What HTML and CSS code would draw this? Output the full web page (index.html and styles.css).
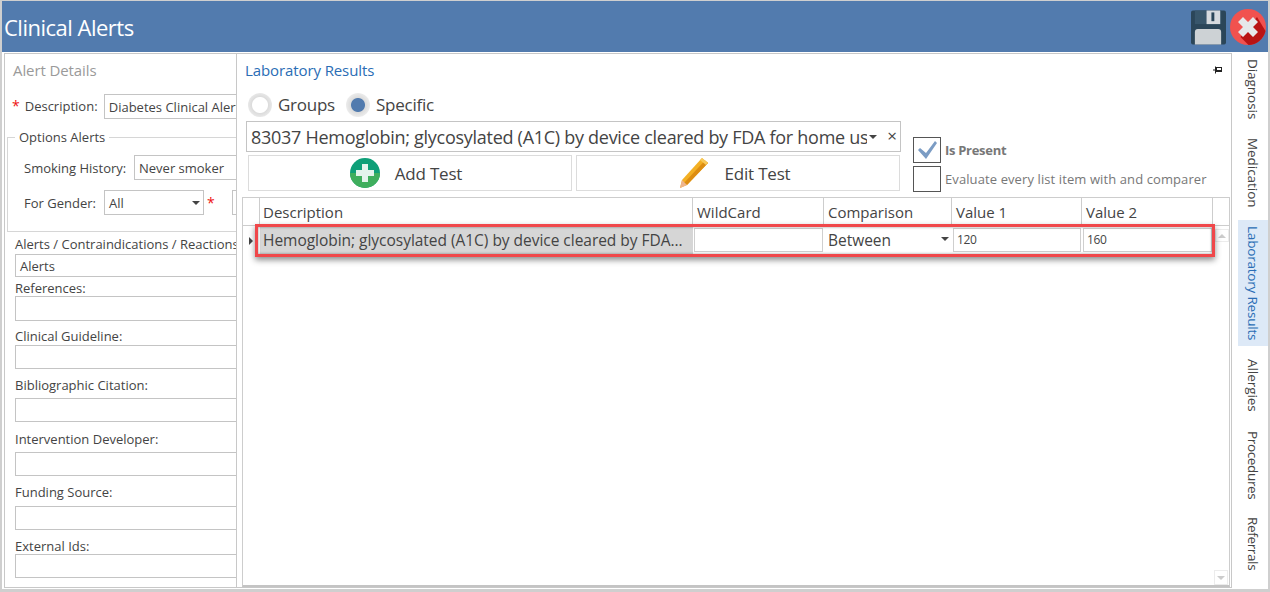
FILE: index.html
```html
<!DOCTYPE html>
<html lang="en">
<head>
<meta charset="utf-8">
<title>Clinical Alerts</title>
<link rel="stylesheet" href="styles.css">
</head>
<body>
<div class="window">
  <header class="titlebar">
    <h1 class="title">Clinical Alerts</h1>
    <div class="title-actions">
      <svg class="save-icon" width="35" height="35" viewBox="0 0 36 35"><rect x="0" y="0" width="36" height="35" rx="2" fill="#2b4659"/><rect x="4" y="0" width="27" height="14" fill="#38566b"/><rect x="16" y="0" width="14" height="14" fill="#d6dade"/><rect x="21" y="2" width="3" height="9" fill="#2b4659"/><path d="M4 35V22a3 3 0 0 1 3-3h21a3 3 0 0 1 3 3v13z" fill="#cdd2d5"/></svg>
      <svg class="close-icon" width="36" height="36" viewBox="0 0 36 36"><circle cx="18" cy="18" r="18" fill="#f1524f"/><path d="M27 8 35.500 22a18 18 0 0 1-17 14l-8-8z" fill="#b91414"/><path d="M8 13l5-5 5 5 5-5 5 5-5 5 5 5-5 5-5-5-5 5-5-5 5-5z" fill="#e6e8ea"/></svg>
    </div>
  </header>
  <main class="content">
    <section class="details">
      <h2 class="details-title">Alert Details</h2>
      <div class="row row-desc">
        <span class="star">*</span>
        <span class="lbl lbl-desc">Description:</span>
        <div class="box box-desc">Diabetes Clinical Alert</div>
      </div>
      <fieldset class="options">
        <legend class="legend">Options Alerts</legend>
        <div class="row row-smoke">
          <span class="lbl lbl-smoke">Smoking History:</span>
          <div class="box box-smoke">Never smoker</div>
        </div>
        <div class="row row-gender">
          <span class="lbl lbl-gender">For Gender:</span>
          <div class="box box-gender">All<span class="caret"></span></div>
          <span class="star star-after">*</span>
          <div class="box box-extra"></div>
        </div>
      </fieldset>
      <div class="fields">
        <span class="lbl lbl-first">Alerts / Contraindications / Reactions:</span>
        <div class="box box-field">Alerts</div>
        <span class="lbl lbl-up">References:</span>
        <div class="box box-field"></div>
        <span class="lbl lbl-down">Clinical Guideline:</span>
        <div class="box box-field"></div>
        <span class="lbl lbl-up">Bibliographic Citation:</span>
        <div class="box box-field"></div>
        <span class="lbl">Intervention Developer:</span>
        <div class="box box-field"></div>
        <span class="lbl lbl-up">Funding Source:</span>
        <div class="box box-field"></div>
        <span class="lbl lbl-low">External Ids:</span>
        <div class="box box-field"></div>
      </div>
    </section>
    <section class="lab">
      <div class="lab-head">
        <h2 class="lab-title">Laboratory Results</h2>
        <svg class="pin" width="9" height="8" viewBox="0 0 9 8"><path d="M0 4h2" stroke="#222" fill="none"/><path d="M2.500 0.500v7" stroke="#222" fill="none"/><rect x="3.500" y="1.500" width="5" height="4" fill="#fff" stroke="#222"/><rect x="3" y="4" width="6" height="2" fill="#222"/></svg>
      </div>
      <div class="lab-controls">
        <div class="lab-left">
          <div class="radios">
            <span class="radio"></span><span class="radio-text radio-text-a">Groups</span>
            <span class="radio radio-on"></span><span class="radio-text">Specific</span>
          </div>
          <div class="combo">
            <span class="combo-text">83037 Hemoglobin; glycosylated (A1C) by device cleared by FDA for home use</span>
            <span class="caret combo-caret"></span>
            <span class="combo-x">×</span>
          </div>
          <div class="buttons">
            <div class="btn">
              <svg class="btn-icon" width="30" height="30" viewBox="0 0 30 30"><circle cx="15" cy="15" r="15" fill="#0e9f78"/><path d="M0 15h30a15 15 0 0 1-30 0z" fill="#3fae5d"/><path d="M12 6h6v6h6v6h-6v6h-6v-6H6v-6h6z" fill="#e3f3ec"/></svg>
              <span>Add Test</span>
            </div>
            <div class="btn">
              <svg class="btn-icon" width="32" height="32" viewBox="0 0 32 32"><path d="M24 1l6 5L9 28 2 31l2-8z" fill="#f3b024"/><path d="M27 3.500l3 2.500L9 28l-3-2z" fill="#dd8d12"/><path d="M24 1l6 5-2 2-6-5z" fill="#f7c95a"/><path d="M4 23l5 5-7 3z" fill="#eeb58e"/></svg>
              <span>Edit Test</span>
            </div>
          </div>
        </div>
        <div class="checks">
          <div class="check-row">
            <span class="check"><svg width="24" height="22" viewBox="0 0 24 22"><path d="M3 11l2-2 6 5 9-12 2 2-11 16z" fill="#7b9cc4"/></svg></span>
            <span class="check-text check-bold">Is Present</span>
          </div>
          <div class="check-row">
            <span class="check"></span>
            <span class="check-text">Evaluate every list item with and comparer</span>
          </div>
        </div>
      </div>
      <div class="grid">
        <div class="grid-head">
          <div class="hcell"></div>
          <div class="hcell hpad hpad-first">Description</div>
          <div class="hcell hpad">WildCard</div>
          <div class="hcell hpad">Comparison</div>
          <div class="hcell hpad">Value 1</div>
          <div class="hcell hpad">Value 2</div>
          <div class="hcell hlast"></div>
        </div>
        <div class="grid-row">
          <div class="marker"><span class="marker-arrow"></span></div>
          <div class="cell cell-desc">Hemoglobin; glycosylated (A1C) by device cleared by FDA...</div>
          <div class="cell cell-input"></div>
          <div class="cell cell-select">Between<span class="caret"></span></div>
          <div class="cell cell-input cell-val">120</div>
          <div class="cell cell-input cell-val">160</div>
          <div class="scroll-up"><span class="tri tri-up"></span></div>
          <div class="highlight"></div>
        </div>
        <div class="scroll-down"><span class="tri tri-down"></span></div>
      </div>
    </section>
    <nav class="tabs">
      <span class="tab">Diagnosis</span>
      <span class="tab">Medication</span>
      <span class="tab tab-on">Laboratory Results</span>
      <span class="tab">Allergies</span>
      <span class="tab tab-tight tab-short">Procedures</span>
      <span class="tab tab-tight">Referrals</span>
      <span class="tab">Codes</span>
    </nav>
  </main>
</div>
</body>
</html>
```
FILE: styles.css
```css
* { box-sizing: border-box; }
html, body { margin: 0; padding: 0; height: 100%; overflow: hidden; }
body { background: #fff; font-family: "Open Sans", "Noto Sans", sans-serif; color: #444; }

.window {
  width: 1270px; height: 592px; overflow: hidden;
  border-style: solid; border-color: #cfcfcf;
  border-width: 1px 2px 3px 2px;
  display: flex; flex-direction: column;
}
.titlebar {
  height: 51px; flex: none; background: #527bae;
  display: flex; align-items: center; justify-content: space-between;
  padding: 0 2px 0 2px;
}
.title { margin: 0; color: #fff; font-size: 22px; font-weight: 400; letter-spacing: -0.5px; }
.title-actions { display: flex; align-items: center; gap: 4px; margin-top: 1px; }

.content { flex: 1; min-height: 0; display: flex; padding: 1px 0 1px 2px; }

/* left column */
.details {
  width: 232px; flex: none; overflow: hidden;
  border: 1px solid #c8c8c8; border-right: 0;
  padding: 0 0 0 1px;
}
.details-title { margin: 7px 0 0 7px; height: 18px; line-height: 18px; font-size: 15px; font-weight: 400; color: #9a9a9a; letter-spacing: -0.1px; }
.lbl { font-size: 13px; color: #444; white-space: nowrap; line-height: 16px; padding-top: 4px; }
.row .lbl { padding-top: 0; }
.lbl-first { padding-top: 0; margin-top: -2px; }
.lbl-up { padding-top: 2px; }
.lbl-down { padding-top: 5px; }
.lbl-low { padding-top: 7px; }
.star { color: #e11; font-size: 14px; line-height: 14px; }
.row { display: flex; align-items: center; white-space: nowrap; }
.row-desc { margin: 15px 0 0 6px; height: 24px; }
.lbl-desc { margin-left: 5px; width: 79px; flex: none; }
.box {
  height: 25px; line-height: 24px; padding: 0 4px;
  border: 1px solid #c4c4c4; background: #fff;
  font-size: 13px; color: #444;
  white-space: nowrap; flex: none; position: relative;
}
.box-desc { width: 300px; }
.options {
  margin: 12px 0 0 1px; padding: 0; min-width: 0;
  width: 400px; height: 102px;
  border: 1px solid #d6d6d6;
}
.legend { margin-left: 7px; padding: 0 4px; font-size: 13px; color: #444; line-height: 15px; }
.row-smoke { margin: 10px 0 0 16px; }
.lbl-smoke { width: 110px; flex: none; }
.box-smoke { width: 200px; }
.row-gender { margin: 10px 0 0 16px; }
.lbl-gender { width: 80px; flex: none; }
.box-gender { width: 100px; }
.star-after { margin-left: 3px; width: 25px; flex: none; }
.box-extra { width: 100px; }
.caret {
  position: absolute; right: 3px; top: 10px; width: 0; height: 0;
  border-left: 4px solid transparent; border-right: 4px solid transparent; border-top: 4px solid #444;
}
.fields {
  margin: 3px 0 0 9px; width: 400px;
  display: grid;
  grid-template-rows: 19px 23px 19px 25px 24px 24px 29px 24px 30px 24px 30px 24px 24px 24px;
  align-items: center;
}
.box-field { width: 400px; align-self: stretch; height: auto; line-height: 22px; }

/* lab column */
.lab {
  flex: 1; min-width: 0;
  border: 1px solid #c8c8c8;
  padding: 0 2px 0 5px;
  display: flex; flex-direction: column;
}
.lab-head { display: flex; align-items: center; justify-content: space-between; height: 36px; flex: none; padding: 0 7px 4px 3px; }
.lab-title { margin: 0; font-size: 15px; font-weight: 400; color: #2a6db5; letter-spacing: -0.1px; }
.lab-controls { display: flex; height: 104px; flex: none; }
.lab-left { width: 660px; flex: none; padding-left: 4px; }
.radios { display: flex; align-items: center; height: 30px; padding-left: 2px; }
.radio {
  width: 24px; height: 24px; border-radius: 50%; flex: none;
  background: radial-gradient(circle at center, #fff 0 7.5px, #dcdcdc 8.5px, #e8e8e8 12px);
}
.radio-on { background: radial-gradient(circle at center, #527bae 0 6.5px, #dcdcdc 7.5px, #ececec 12px); }
.radio-text { margin-left: 6px; font-size: 17px; letter-spacing: -0.25px; line-height: 26px; color: #444; }
.radio-text-a { width: 68px; }
.combo {
  width: 655px; height: 31px; border: 1px solid #c4c4c4;
  display: flex; align-items: center; padding-left: 4px; margin-top: 1px;
  position: relative;
}
.combo-text { width: 616px; flex: none; overflow: hidden; white-space: nowrap; font-size: 18px; letter-spacing: -0.28px; color: #444; }
.combo-caret { right: 23px; top: 13px; }
.combo-x { position: absolute; right: 3px; top: 2px; font-size: 17px; line-height: 24px; color: #444; }
.buttons { display: flex; gap: 4px; margin: 3px 0 0 2px; }
.btn {
  width: 324px; height: 36px; border: 1px solid #dcdcdc;
  display: flex; align-items: center; justify-content: center; gap: 15px;
  font-size: 17px; letter-spacing: -0.2px; color: #444;
}
.btn-icon { flex: none; margin-left: -8px; }
.checks { padding: 47px 0 0 11px; display: flex; flex-direction: column; gap: 3px; }
.check-row { display: flex; align-items: center; gap: 4px; white-space: nowrap; }
.check { width: 28px; height: 26px; flex: none; border: 1px solid #555; display: flex; align-items: center; justify-content: center; }
.check-text { font-size: 13px; letter-spacing: 0.1px; color: #777; }
.check-bold { font-weight: 700; letter-spacing: -0.3px; }

.grid {
  flex: 1; min-height: 0; margin-top: 3px; margin-bottom: 0;
  width: 988px; position: relative;
  border: 1px solid #cdcdcd; border-bottom: 2px solid #c4c4c4;
}
.grid-head { display: grid; grid-template-columns: 17px 433px 131px 128px 130px 131px 17px; height: 28px; border-bottom: 1px solid #cdcdcd; }
.hcell { border-right: 1px solid #cdcdcd; font-size: 15px; line-height: 29px; color: #444; white-space: nowrap; }
.hpad { padding-left: 4px; }
.hpad-first { padding-left: 3px; }
.hlast { border-right: 0; }
.grid-row { display: grid; grid-template-columns: 17px 433px 131px 128px 130px 131px 17px; height: 29px; position: relative; }
.marker { display: flex; align-items: center; padding-left: 6px; }
.marker-arrow { width: 0; height: 0; border-top: 4px solid transparent; border-bottom: 4px solid transparent; border-left: 4px solid #444; }
.cell { font-size: 15.5px; letter-spacing: -0.03px; line-height: 29px; color: #444; white-space: nowrap; position: relative; }
.cell-desc { background: #d6d6d6; padding-left: 3px; overflow: hidden; }
.cell-input { border: 1px solid #cfcfcf; margin: 2px 1px 3px 1px; background: #fff; line-height: 22px; }
.cell-val { font-size: 12px; letter-spacing: -0.3px; padding-left: 3px; }
.cell-select { padding-left: 4px; }
.cell-select .caret { top: 11px; right: 3px; }
.scroll-up { margin: 3px 1px 0 2px; height: 13px; border: 1px solid #ececec; display: flex; align-items: center; justify-content: center; }
.scroll-down { position: absolute; right: 1px; bottom: 0; width: 14px; height: 15px; border: 1px solid #ececec; display: flex; align-items: center; justify-content: center; }
.tri { width: 0; height: 0; border-left: 4px solid transparent; border-right: 4px solid transparent; }
.tri-up { border-bottom: 4px solid #ccc; }
.tri-down { border-top: 4px solid #ccc; }
.highlight {
  position: absolute; left: 12px; right: 14px; top: -2px; height: 33px;
  border: 3px solid #f0474a; box-shadow: 0 3px 6px rgba(0,0,0,.45), inset 0 0 3px rgba(0,0,0,.4);
  pointer-events: none;
}

/* tabs */
.tabs {
  width: 36px; flex: none; overflow: hidden;
  display: flex; flex-direction: column; align-items: stretch;
  padding: 6px 0 0 6px;
}
.tab {
  writing-mode: vertical-rl; flex: none;
  font-size: 13.5px; letter-spacing: -0.05px; color: #444; white-space: nowrap;
  line-height: 30px; padding: 0 0 19px 0; text-align: left;
}
.tab-tight { letter-spacing: -0.35px; }
.tab-short { padding-bottom: 18px; }
.tab-on { letter-spacing: -0.2px; background: #dde9f7; color: #2a6db5; padding: 6px 0 6px 0; margin: -7px 0 13px 0; }
```
